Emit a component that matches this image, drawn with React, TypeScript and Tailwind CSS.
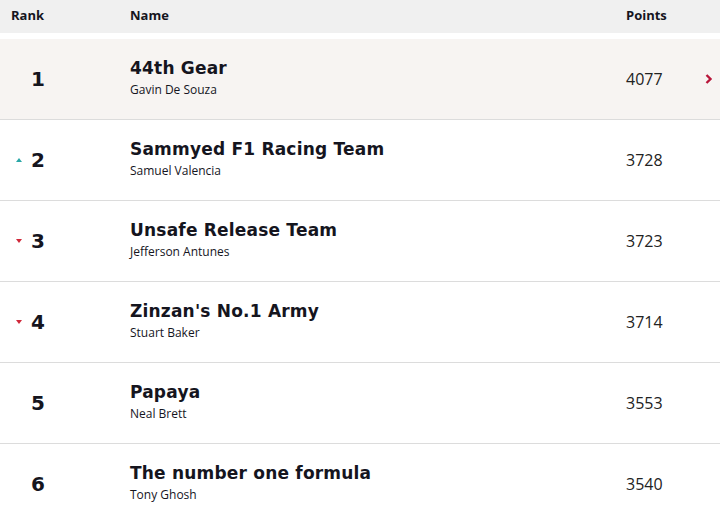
import React from "react";

type Row = { rank: number; team: string; player: string; points: number; move?: "up" | "down" };

const rows: Row[] = [
  { rank: 1, team: "44th Gear", player: "Gavin De Souza", points: 4077 },
  { rank: 2, team: "Sammyed F1 Racing Team", player: "Samuel Valencia", points: 3728, move: "up" },
  { rank: 3, team: "Unsafe Release Team", player: "Jefferson Antunes", points: 3723, move: "down" },
  { rank: 4, team: "Zinzan's No.1 Army", player: "Stuart Baker", points: 3714, move: "down" },
  { rank: 5, team: "Papaya", player: "Neal Brett", points: 3553 },
  { rank: 6, team: "The number one formula", player: "Tony Ghosh", points: 3540 },
];

const display = { fontFamily: '"DejaVu Sans", Verdana, sans-serif' };
const body = { fontFamily: '"Open Sans", "Liberation Sans", sans-serif' };

export default function App() {
  return (
    <div className="w-[720px] h-[513px] overflow-hidden bg-white text-[#15151e]">
      <div className="flex items-center h-[33px] bg-[#f0f0f0] text-[13px] font-bold pb-[2px]" style={body}>
        <div className="w-[130px] pl-[11px]">Rank</div>
        <div className="flex-1">Name</div>
        <div className="w-[94px]">Points</div>
      </div>
      <div className="h-[6px]" />
      {rows.map((r) => (
        <div
          key={r.rank}
          className={`relative flex items-center h-[81px] border-b border-[#dcdcdc] ${r.rank === 1 ? "bg-[#f7f4f2]" : "bg-white"}`}
        >
          <div className="w-[130px] relative flex items-center justify-center pr-[54px]">
            {r.move === "up" && (
              <span className="absolute left-[16px] top-1/2 -translate-y-1/2 w-0 h-0 border-l-[3px] border-r-[3px] border-b-[4px] border-l-transparent border-r-transparent border-b-[#2aa7a7]" />
            )}
            {r.move === "down" && (
              <span className="absolute left-[16px] top-1/2 -translate-y-[2px] w-0 h-0 border-l-[3px] border-r-[3px] border-t-[4px] border-l-transparent border-r-transparent border-t-[#d0283a]" />
            )}
            <span className="text-[20px] font-bold" style={display}>{r.rank}</span>
          </div>
          <div className="flex-1 flex flex-col mb-[3px]">
            <div className="text-[17px] font-bold leading-[22px] tracking-[0.2px]" style={display}>{r.team}</div>
            <div className="text-[12px] font-medium leading-[18px] mt-[2px]" style={body}>{r.player}</div>
          </div>
          <div className="w-[94px] text-[16px] text-[#222]" style={body}>{r.points}</div>
          {r.rank === 1 ? (
            <svg className="absolute left-[703px] top-1/2 -translate-y-1/2" width="11" height="13" viewBox="0 0 11 13">
              <path d="M3.5 2.5l4 4-4 4" fill="none" stroke="#b8163a" strokeWidth="2.4" />
            </svg>
          ) : null}
        </div>
      ))}
    </div>
  );
}
